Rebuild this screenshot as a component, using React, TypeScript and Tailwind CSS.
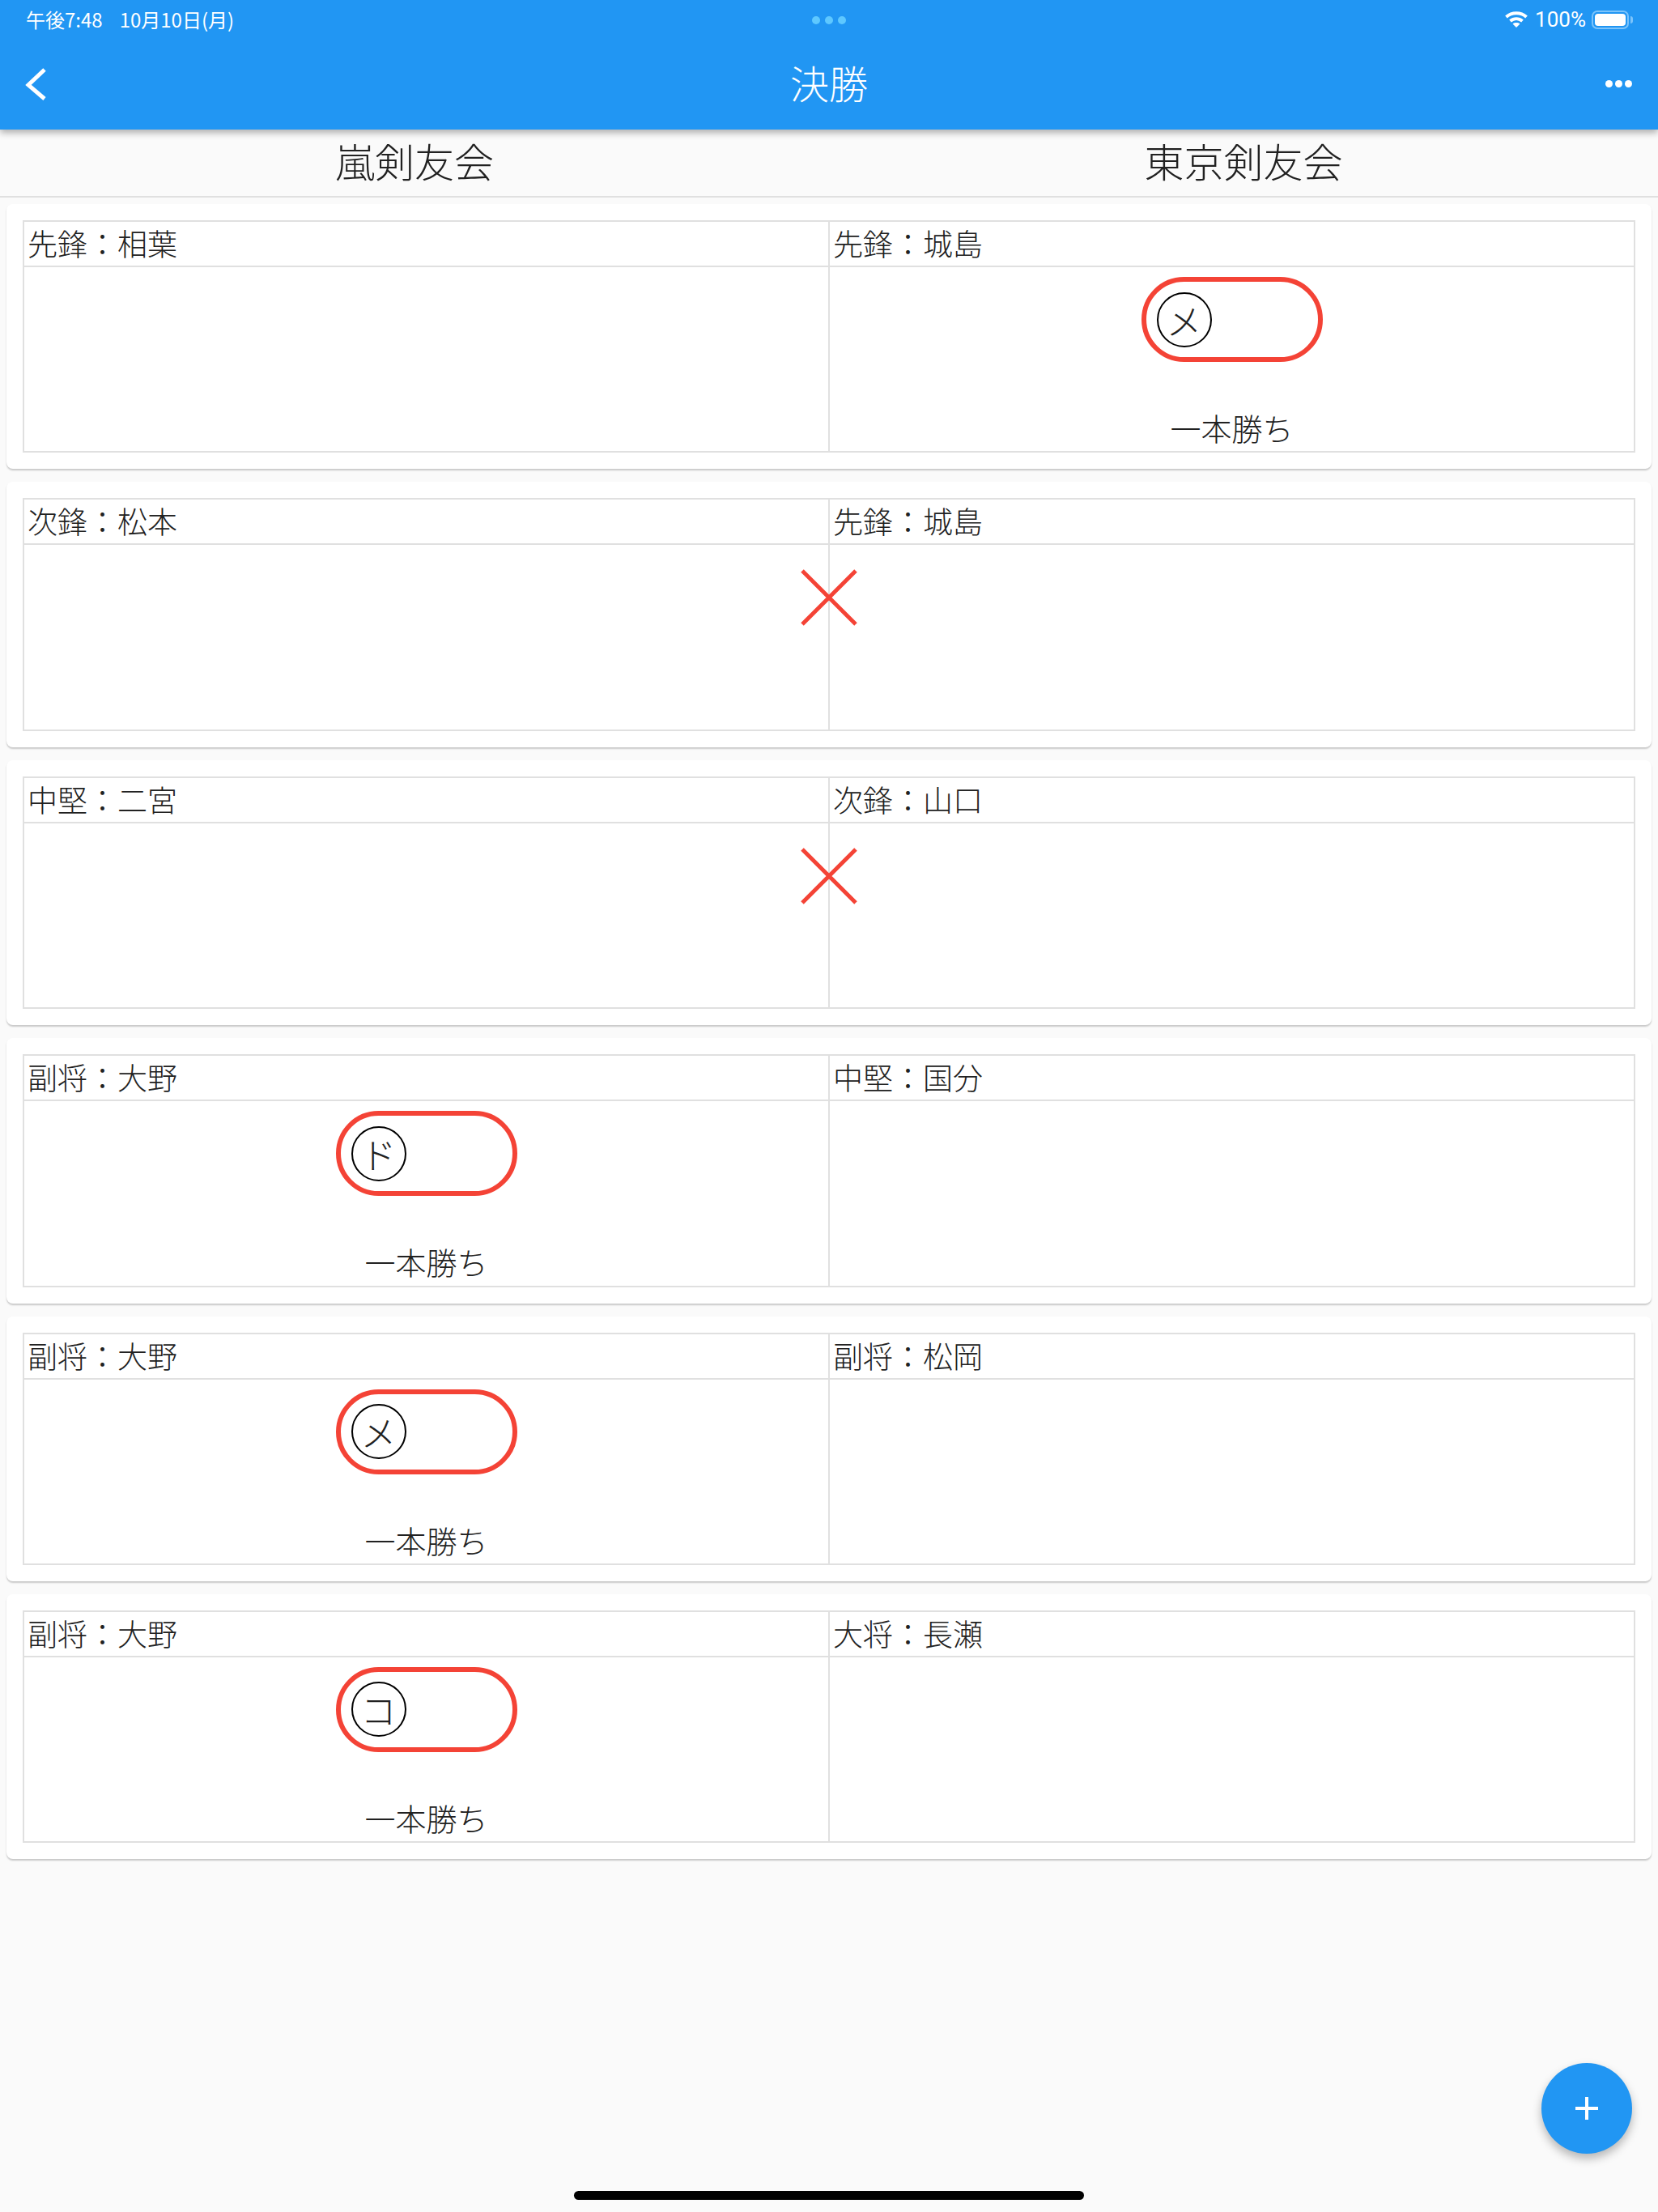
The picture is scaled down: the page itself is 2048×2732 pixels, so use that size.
const JP = "font-['Noto_Sans_CJK_JP',sans-serif]";

type Match = {
  left: string;
  right: string;
  winner?: "left" | "right";
  mark?: string;
  draw?: boolean;
};

const matches: Match[] = [
  { left: "先鋒：相葉", right: "先鋒：城島", winner: "right", mark: "メ" },
  { left: "次鋒：松本", right: "先鋒：城島", draw: true },
  { left: "中堅：二宮", right: "次鋒：山口", draw: true },
  { left: "副将：大野", right: "中堅：国分", winner: "left", mark: "ド" },
  { left: "副将：大野", right: "副将：松岡", winner: "left", mark: "メ" },
  { left: "副将：大野", right: "大将：長瀬", winner: "left", mark: "コ" },
];

function StatusBar() {
  return (
    <div className="relative flex h-12 items-center justify-between pl-[32px] pr-[31px] font-['Roboto',sans-serif] text-[26px] text-white">
      <div className={`flex gap-[21px] ${JP} text-[24px]`}>
        <span>午後7:48</span>
        <span>10月10日(月)</span>
      </div>
      <div className="absolute left-[1003px] top-[20px] flex gap-[6px]">
        <span className="h-[10px] w-[10px] rounded-full bg-[#5ec8ff]" />
        <span className="h-[10px] w-[10px] rounded-full bg-[#5ec8ff]" />
        <span className="h-[10px] w-[10px] rounded-full bg-[#5ec8ff]" />
      </div>
      <div className="flex items-center">
        <svg className="mr-[9px]" width="28" height="20" viewBox="0 0 28 20" fill="none" stroke="white" strokeWidth="4">
          <path d="M1.5 7 C8.5 0.8 19.5 0.8 26.5 7" />
          <path d="M6.5 12 C11 8.2 17 8.2 21.5 12" />
          <path d="M14 20 L9.5 15.5 C12 13.6 16 13.6 18.5 15.5 Z" fill="white" stroke="none" />
        </svg>
        <span className="mr-[7px]">100%</span>
        <div className="flex items-center">
          <div className="h-[23px] w-[46px] rounded-[7px] border-2 border-[#7cc4fb] p-[2px]">
            <div className="h-full w-full rounded-[4px] bg-white" />
          </div>
          <div className="ml-[2px] h-[9px] w-[3px] rounded-r-full bg-[#7cc4fb]" />
        </div>
      </div>
    </div>
  );
}

function AppBar() {
  return (
    <header className="relative z-10 h-[160px] bg-[#2196f3] shadow-[0_4px_8px_rgba(0,0,0,0.3)]">
      <StatusBar />
      <div className="relative flex h-[112px] items-center justify-center">
        <svg className="absolute left-[30px] top-[36px]" width="28" height="40" viewBox="0 0 28 40" fill="none" stroke="white" strokeWidth="5">
          <path d="M25 2 L5 21 L25 38" />
        </svg>
        <h1 className={`${JP} -mt-[6px] text-[48px] font-light text-white`}>決勝</h1>
        <div className="absolute right-[32px] top-[51px] flex gap-[3px]">
          <span className="h-[9px] w-[9px] rounded-full bg-white" />
          <span className="h-[9px] w-[9px] rounded-full bg-white" />
          <span className="h-[9px] w-[9px] rounded-full bg-white" />
        </div>
      </div>
    </header>
  );
}

function ResultPill({ mark }: { mark: string }) {
  return (
    <div className="flex h-full flex-col items-center pt-[12px]">
      <div className="flex h-[105px] w-[224px] items-center rounded-full border-[6px] border-[#f44336] pl-[13px]">
        <div className="flex h-[68px] w-[68px] items-center justify-center rounded-full border-2 border-black text-[44px] leading-none">
          {mark}
        </div>
      </div>
      <div className="mt-[54px] text-[38px] leading-[54px]">一本勝ち</div>
    </div>
  );
}

function MatchCard({ match }: { match: Match }) {
  return (
    <section className="relative rounded-[8px] bg-white p-[20px] shadow-[0_2px_2px_rgba(0,0,0,0.2)]">
      <div className={`grid grid-cols-[995px_1fr] border-2 border-[#e0e0e0] ${JP} font-light text-[#212121]`}>
        <div className="h-[56px] border-b-2 border-r-2 border-[#e0e0e0] pl-[4px] text-[37px] leading-[52px]">
          {match.left}
        </div>
        <div className="h-[56px] border-b-2 border-[#e0e0e0] pl-[4px] text-[37px] leading-[52px]">
          {match.right}
        </div>
        <div className="h-[227.4px] border-r-2 border-[#e0e0e0]">
          {match.winner === "left" && <ResultPill mark={match.mark ?? ""} />}
        </div>
        <div className="h-[227.4px]">
          {match.winner === "right" && <ResultPill mark={match.mark ?? ""} />}
        </div>
      </div>
      {match.draw && (
        <svg
          className="absolute left-[981px] top-[108px]"
          width="70"
          height="70"
          viewBox="0 0 70 70"
          fill="none"
          stroke="#f44336"
          strokeWidth="5"
        >
          <path d="M2 2 L68 68 M68 2 L2 68" />
        </svg>
      )}
    </section>
  );
}

export default function App() {
  return (
    <div className="relative h-[2732px] w-[2048px] overflow-hidden bg-[#fafafa]">
      <AppBar />
      <div className={`grid h-[84px] grid-cols-2 border-b-2 border-[#e0e0e0] ${JP} font-light text-[#212121]`}>
        <div className="text-center text-[49px] leading-[75px]">嵐剣友会</div>
        <div className="text-center text-[49px] leading-[75px]">東京剣友会</div>
      </div>
      <main className="flex flex-col gap-[16px] px-[8px] pt-[8px]">
        {matches.map((match, i) => (
          <MatchCard key={i} match={match} />
        ))}
      </main>
      <button className="absolute left-[1904px] top-[2548px] flex h-[112px] w-[112px] items-center justify-center rounded-full bg-[#2196f3] shadow-[0_6px_12px_rgba(0,0,0,0.28)]">
        <svg width="28" height="28" viewBox="0 0 28 28" fill="white">
          <path d="M12 0 H16 V12 H28 V16 H16 V28 H12 V16 H0 V12 H12 Z" />
        </svg>
      </button>
      <div className="absolute left-[709px] top-[2706px] h-[11px] w-[630px] rounded-full bg-black" />
    </div>
  );
}
